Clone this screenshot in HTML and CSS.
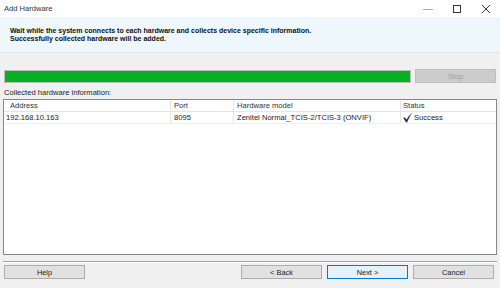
FILE: index.html
```html
<!DOCTYPE html>
<html>
<head>
<meta charset="utf-8">
<link rel="stylesheet" href="styles.css">
</head>
<body>
<div class="window">
  <div class="titlebar">
    <span class="title">Add Hardware</span>
    <div class="controls">
      <svg class="ctl" width="10" height="10" viewBox="0 0 10 10"><path d="M0 5.5 H10" stroke="#999" stroke-width="0.8"/></svg>
      <svg class="ctl" width="10" height="10" viewBox="0 0 10 10"><rect x="1.5" y="1.5" width="7" height="7" fill="none" stroke="#222" stroke-width="0.9"/></svg>
      <svg class="ctl" width="10" height="10" viewBox="0 0 10 10"><path d="M1 1 L9 9 M9 1 L1 9" stroke="#222" stroke-width="0.9"/></svg>
    </div>
  </div>
  <div class="header">
    <p>Wait while the system connects to each hardware and collects device specific information.</p>
    <p>Successfully collected hardware will be added.</p>
  </div>
  <div class="content">
    <div class="progress-row">
      <div class="progress"><div class="fill"></div></div>
      <div class="btn disabled stop">Stop</div>
    </div>
    <div class="label">Collected hardware information:</div>
    <div class="table">
      <div class="row head">
        <div class="cell c1">Address</div>
        <div class="cell c2">Port</div>
        <div class="cell c3">Hardware model</div>
        <div class="cell c4">Status</div>
      </div>
      <div class="row data">
        <div class="cell c1">192.168.10.163</div>
        <div class="cell c2">8095</div>
        <div class="cell c3">Zenitel Normal_TCIS-2/TCIS-3 (ONVIF)</div>
        <div class="cell c4"><svg class="check" width="10" height="11" viewBox="0 0 10 11"><path d="M0.3 6.2 L1.6 5.2 L3.6 7.6 Q6 3.2 9.8 0.3 Q6.8 3.6 4.1 10.6 L3.2 10.6 Z" fill="#1d3562"/></svg>Success</div>
      </div>
    </div>
  </div>
  <div class="separator"></div>
  <div class="footer">
    <div class="btn help">Help</div>
    <div class="right">
      <div class="btn">&lt; Back</div>
      <div class="btn default">Next &gt;</div>
      <div class="btn">Cancel</div>
    </div>
  </div>
</div>
</body>
</html>
```
FILE: styles.css
```css
* { box-sizing: border-box; }
html, body { margin: 0; padding: 0; }
body {
  width: 500px;
  height: 288px;
  overflow: hidden;
  font-family: "Liberation Sans", Arial, sans-serif;
  font-size: 7.6px;
  color: #1a1a1a;
  background: #f0f0f0;
}
.window { width: 500px; height: 288px; display: flex; flex-direction: column; }
.titlebar {
  height: 17px;
  background: #fff;
  display: flex;
  align-items: center;
  justify-content: space-between;
  padding-left: 4px;
}
.title { font-size: 7.6px; color: #333; }
.controls { display: flex; gap: 19px; padding-right: 9px; }
.ctl { display: block; }
.header {
  height: 36px;
  background: #eef7fb;
  border-bottom: 1px solid #dbe6eb;
  padding: 10px 0 0 10px;
  font-weight: bold;
  font-size: 7px;
  line-height: 8px;
  color: #111;
}
.header p { margin: 0; }
.content { padding: 16px 3px 0 3px; }
.progress-row { display: flex; align-items: center; gap: 4px; padding-left: 1px; }
.progress {
  width: 407px;
  height: 13px;
  border: 1px solid #bcbcbc;
  background: #e6e6e6;
}
.fill { width: 100%; height: 100%; background: #06b025; }
.btn {
  height: 14px;
  width: 81px;
  border: 1px solid #adadad;
  background: #e1e1e1;
  display: flex;
  align-items: center;
  justify-content: center;
  font-size: 7.4px;
  color: #1a1a1a;
}
.btn.disabled { background: #cccccc; border-color: #bfbfbf; color: #9d9d9d; }
.btn.default { border-color: #0078d7; background: #e5f1fb; }
.label { margin-top: 5px; padding-left: 1px; height: 9px; line-height: 9px; color: #222; }
.table {
  margin-top: 2px;
  height: 156px;
  background: #fff;
  border: 1px solid #828790;
}
.row { display: flex; height: 12px; }
.row.head { border-bottom: 1px solid #e5e5e5; }
.row.data { border-bottom: 1px solid #f0f0f0; }
.cell {
  display: flex;
  align-items: center;
  border-right: 1px solid #e5e5e5;
  white-space: nowrap;
  overflow: hidden;
}
.head .cell { color: #333; }
.c1 { width: 167px; padding-left: 2px; }
.head .c1 { padding-left: 6px; }
.c2 { width: 63px; padding-left: 3px; }
.c3 { width: 167px; padding-left: 3px; }
.c4 { flex: 1; padding-left: 2px; border-right: none; }
.check { margin-right: 1px; }
.separator { margin: 6px 3px 0 3px; height: 2px; border-top: 1px solid #a0a0a0; border-bottom: 1px solid #fff; }
.footer {
  display: flex;
  justify-content: space-between;
  padding: 2px 6px 0 4px;
}
.right { display: flex; gap: 5px; }
```
